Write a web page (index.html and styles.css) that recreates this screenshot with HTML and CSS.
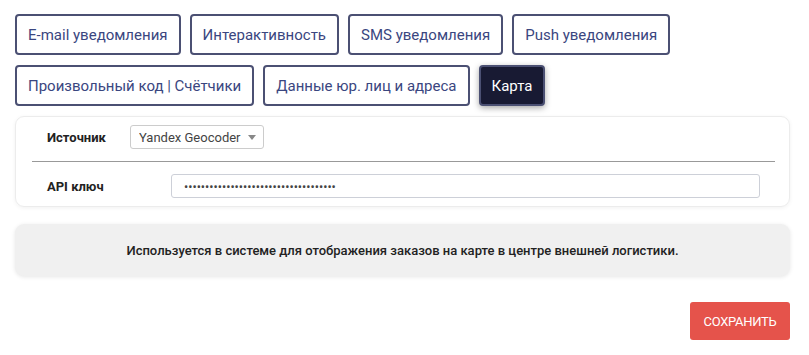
FILE: index.html
```html
<!DOCTYPE html>
<html lang="ru">

<head>
    <meta charset="UTF-8">
    <meta name="viewport" content="width=device-width, initial-scale=1.0">
    <title>Карта</title>
    <link rel="stylesheet" href="styles.css">
</head>

<body>

    <div class="page">

        <!-- tabs -->
        <div class="tabs">
            <button class="tab" type="button">E-mail уведомления</button>
            <button class="tab" type="button">Интерактивность</button>
            <button class="tab" type="button">SMS уведомления</button>
            <button class="tab" type="button">Push уведомления</button>
            <button class="tab" type="button">Произвольный код | Счётчики</button>
            <button class="tab" type="button">Данные юр. лиц и адреса</button>
            <button class="tab active" type="button">Карта</button>
        </div>

        <form class="card">
            <div class="row">
                <label class="row-label" for="source">Источник</label>
                <div class="select-box">
                    <select id="source">
                        <option value="yandex">Yandex Geocoder</option>
                    </select>
                </div>
            </div>

            <hr class="divider">

            <div class="row">
                <label class="row-label wide" for="apiKey">API ключ</label>
                <input type="password" id="apiKey" class="key-input" value="abcdefghijklmnopqrstuvwxyz0123456789">
            </div>
        </form>

        <div class="note">
            Используется в системе для отображения заказов на карте в центре внешней логистики.
        </div>

        <div class="actions">
            <button class="save" type="button">Сохранить</button>
        </div>

    </div>

</body>

</html>
```

FILE: styles.css
```css
body {
    margin: 0;
    background-color: #fff;
    font-family: Roboto, "Liberation Sans", sans-serif;
    color: #222;
}

.page {
    padding: 14px 19px 0 15px;
}

.tabs {
    display: flex;
    flex-wrap: wrap;
    gap: 10px 9px;
}

.tab {
    height: 41px;
    padding: 0 11px;
    border: 2px solid #4b5073;
    border-radius: 4px;
    background-color: #fff;
    color: #3a4680;
    font-family: Roboto, sans-serif;
    font-size: 15px;
    cursor: pointer;
}

.tab.active {
    background-color: #181a33;
    color: #fff;
    box-shadow: 0 2px 6px rgba(0, 0, 0, 0.35);
}

.card {
    margin-top: 10px;
    padding: 8px 14px 8px 16px;
    border: 1px solid #ececec;
    border-radius: 9px;
    box-shadow: 0 1px 4px rgba(0, 0, 0, 0.06);
}

.row {
    display: flex;
    align-items: center;
    padding: 0 15px 0 15px;
}

.row-label {
    width: 83px;
    font-size: 13px;
    font-weight: 700;
    color: #222;
}

.row-label.wide {
    width: 124px;
}

.select-box {
    position: relative;
}

.select-box::after {
    content: "";
    position: absolute;
    right: 8px;
    top: 10px;
    border-left: 4px solid transparent;
    border-right: 4px solid transparent;
    border-top: 5px solid #888;
    pointer-events: none;
}

select {
    appearance: none;
    width: 134px;
    height: 24px;
    padding: 0 0 0 8px;
    border: 1px solid #ccc;
    border-radius: 3px;
    background-color: #fff;
    font-family: Roboto, sans-serif;
    font-size: 13px;
    color: #444;
}

.divider {
    margin: 12px 0;
    border: none;
    border-top: 1px solid #999;
}

.key-input {
    flex: 1;
    height: 24px;
    box-sizing: border-box;
    padding: 0 12px;
    border: 1px solid #cdd0d8;
    border-radius: 3px;
    font-family: Roboto, sans-serif;
    font-size: 12.5px;
    color: #444;
}

.note {
    margin-top: 17px;
    height: 52px;
    display: flex;
    align-items: center;
    justify-content: center;
    border-radius: 9px;
    background-color: #f0f0f0;
    box-shadow: 0 1px 4px rgba(0, 0, 0, 0.1);
    font-size: 13px;
    font-weight: 500;
    color: #222;
}

.actions {
    display: flex;
    justify-content: flex-end;
    margin-top: 26px;
}

.save {
    width: 100px;
    height: 38px;
    border: none;
    border-radius: 3px;
    background-color: #e5534b;
    color: #fff;
    font-family: Roboto, sans-serif;
    font-size: 13px;
    letter-spacing: -0.3px;
    text-transform: uppercase;
    cursor: pointer;
}
```
